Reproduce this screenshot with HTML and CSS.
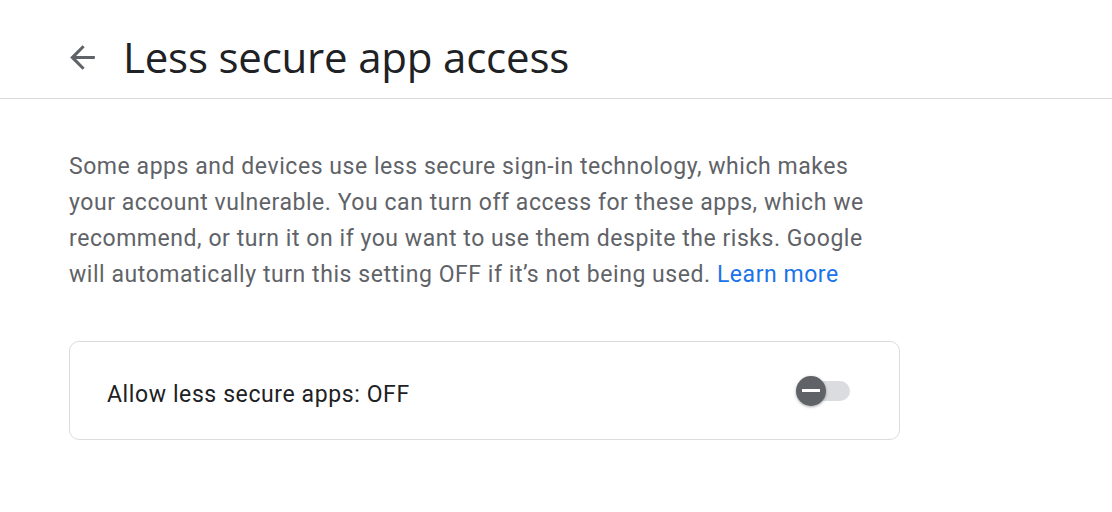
FILE: index.html
```html
<!DOCTYPE html>
<html lang="en">
<head>
<meta charset="utf-8">
<link rel="stylesheet" href="styles.css">
<title>Less secure app access</title>
</head>
<body>
<header class="header">
  <a class="back" href="#" aria-label="Back">
    <svg viewBox="0 0 24 24" width="37" height="37"><path d="M20 11H7.83l5.59-5.59L12 4l-8 8 8 8 1.41-1.41L7.83 13H20v-2z" fill="#5f6368"/></svg>
  </a>
  <h1 class="title">Less secure app access</h1>
</header>
<main class="content">
  <p class="desc">Some apps and devices use less secure sign-in technology, which makes your account vulnerable. You can turn off access for these apps, which we recommend, or turn it on if you want to use them despite the risks. Google will automatically turn this setting OFF if it’s not being used. <a class="link" href="#">Learn more</a></p>
  <div class="card">
    <span class="card-label">Allow less secure apps: OFF</span>
    <div class="toggle">
      <div class="track"></div>
      <div class="thumb"><span class="minus"></span></div>
    </div>
  </div>
</main>
</body>
</html>
```
FILE: styles.css
```css
html, body {
  margin: 0;
  padding: 0;
  background: #fff;
}
body {
  font-family: Roboto, "Liberation Sans", Arial, sans-serif;
  color: #202124;
}
.header {
  height: 99px;
  border-bottom: 1px solid #dadce0;
  display: flex;
  align-items: center;
  padding: 16px 0 0 64px;
  box-sizing: border-box;
}
.back {
  display: flex;
  width: 37px;
  height: 37px;
  margin-right: 22px;
}
.title {
  margin: 0;
  font-family: "Open Sans", Roboto, sans-serif;
  font-weight: 400;
  font-size: 42px;
  line-height: 50px;
  color: #202124;
  letter-spacing: -0.2px;
}
.content {
  padding: 50px 0 0 69px;
  width: 831px;
}
.desc {
  margin: 0;
  font-size: 23px;
  letter-spacing: 0.55px;
  line-height: 36px;
  color: #5f6368;
  width: 800px;
}
.link {
  color: #1a73e8;
  text-decoration: none;
}
.card {
  margin-top: 48px;
  height: 99px;
  border: 1px solid #dadce0;
  border-radius: 10px;
  box-sizing: border-box;
  display: flex;
  align-items: center;
  justify-content: space-between;
  padding: 0 49px 0 37px;
}
.card-label {
  font-size: 23px;
  letter-spacing: 0.6px;
  color: #202124;
  margin-top: 8px;
}
.toggle {
  position: relative;
  width: 54px;
  height: 30px;
}
.track {
  position: absolute;
  left: 4px;
  top: 5px;
  width: 50px;
  height: 20px;
  border-radius: 10px;
  background: #dadce0;
}
.thumb {
  position: absolute;
  left: 0;
  top: 0;
  width: 30px;
  height: 30px;
  border-radius: 50%;
  background: #5f6368;
  box-shadow: 0 1px 3px rgba(0,0,0,0.35);
  display: flex;
  align-items: center;
  justify-content: center;
}
.minus {
  width: 18px;
  height: 3px;
  background: #fff;
}
```
